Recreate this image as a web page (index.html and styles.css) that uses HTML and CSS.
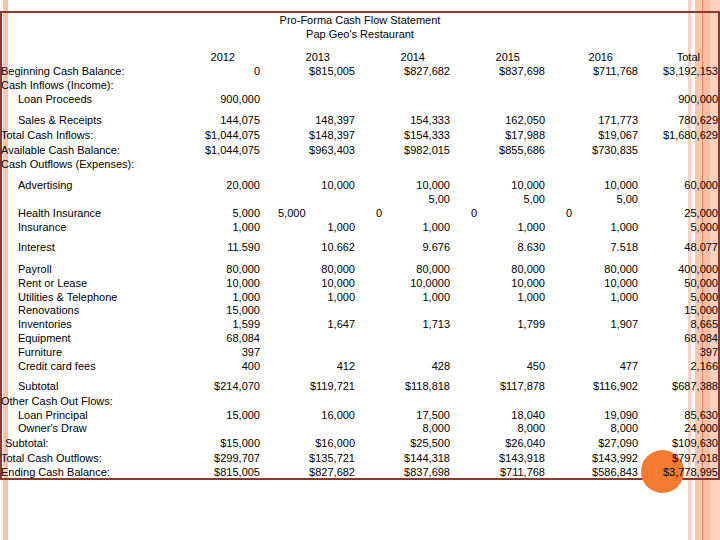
FILE: index.html
```html
<!DOCTYPE html>
<html>
<head>
<meta charset="utf-8">
<link rel="stylesheet" href="styles.css">
</head>
<body>
<div class="sheet">
  <div class="dot"></div>
  <div class="title">Pro-Forma Cash Flow Statement<br>Pap Geo's Restaurant</div>
  <div class="rows">
    <div class="row head"><span></span><span>2012</span><span>2013</span><span>2014</span><span>2015</span><span>2016</span><span class="tot">Total</span></div>
    <div class="row"><span class="lab">Beginning Cash Balance:</span><span>0</span><span>$815,005</span><span>$827,682</span><span>$837,698</span><span>$711,768</span><span>$3,192,153</span></div>
    <div class="row"><span class="lab">Cash Inflows (Income):</span><span></span><span></span><span></span><span></span><span></span><span></span></div>
    <div class="row"><span class="lab in">Loan Proceeds</span><span>900,000</span><span></span><span></span><span></span><span></span><span>900,000</span></div>
    <div class="row sp7"><span class="lab in">Sales &amp; Receipts</span><span>144,075</span><span>148,397</span><span>154,333</span><span>162,050</span><span>171,773</span><span>780,629</span></div>
    <div class="row sp1"><span class="lab">Total Cash Inflows:</span><span>$1,044,075</span><span>$148,397</span><span>$154,333</span><span>$17,988</span><span>$19,067</span><span>$1,680,629</span></div>
    <div class="row sp1"><span class="lab">Available Cash Balance:</span><span>$1,044,075</span><span>$963,403</span><span>$982,015</span><span>$855,686</span><span>$730,835</span><span></span></div>
    <div class="row"><span class="lab">Cash Outflows (Expenses):</span><span></span><span></span><span></span><span></span><span></span><span></span></div>
    <div class="row sp7"><span class="lab in">Advertising</span><span>20,000</span><span>10,000</span><span>10,000</span><span>10,000</span><span>10,000</span><span>60,000</span></div>
    <div class="row"><span class="lab"></span><span></span><span></span><span>5,00</span><span>5,00</span><span>5,00</span><span></span></div>
    <div class="row"><span class="lab in">Health Insurance</span><span>5,000</span><span class="left l18">5,000</span><span class="left">0</span><span class="left">0</span><span class="left">0</span><span>25,000</span></div>
    <div class="row"><span class="lab in">Insurance</span><span>1,000</span><span>1,000</span><span>1,000</span><span>1,000</span><span>1,000</span><span>5,000</span></div>
    <div class="row sp6"><span class="lab in">Interest</span><span>11.590</span><span>10.662</span><span>9.676</span><span>8.630</span><span>7.518</span><span>48.077</span></div>
    <div class="row sp8"><span class="lab in">Payroll</span><span>80,000</span><span>80,000</span><span>80,000</span><span>80,000</span><span>80,000</span><span>400,000</span></div>
    <div class="row"><span class="lab in">Rent or Lease</span><span>10,000</span><span>10,000</span><span>10,0000</span><span>10,000</span><span>10,000</span><span>50,000</span></div>
    <div class="row"><span class="lab in">Utilities &amp; Telephone</span><span>1,000</span><span>1,000</span><span>1,000</span><span>1,000</span><span>1,000</span><span>5,000</span></div>
    <div class="row spm1"><span class="lab in">Renovations</span><span>15,000</span><span></span><span></span><span></span><span></span><span>15,000</span></div>
    <div class="row"><span class="lab in">Inventories</span><span>1,599</span><span>1,647</span><span>1,713</span><span>1,799</span><span>1,907</span><span>8,665</span></div>
    <div class="row"><span class="lab in">Equipment</span><span>68,084</span><span></span><span></span><span></span><span></span><span>68,084</span></div>
    <div class="row"><span class="lab in">Furniture</span><span>397</span><span></span><span></span><span></span><span></span><span>397</span></div>
    <div class="row"><span class="lab in">Credit card fees</span><span>400</span><span>412</span><span>428</span><span>450</span><span>477</span><span>2,166</span></div>
    <div class="row sp6"><span class="lab in">Subtotal</span><span>$214,070</span><span>$119,721</span><span>$118,818</span><span>$117,878</span><span>$116,902</span><span>$687,388</span></div>
    <div class="row sp1"><span class="lab">Other Cash Out Flows:</span><span></span><span></span><span></span><span></span><span></span><span></span></div>
    <div class="row"><span class="lab in">Loan Principal</span><span>15,000</span><span>16,000</span><span>17,500</span><span>18,040</span><span>19,090</span><span>85,630</span></div>
    <div class="row spm1"><span class="lab in">Owner's Draw</span><span></span><span></span><span>8,000</span><span>8,000</span><span>8,000</span><span>24,000</span></div>
    <div class="row sp1"><span class="lab in5">Subtotal:</span><span>$15,000</span><span>$16,000</span><span>$25,500</span><span>$26,040</span><span>$27,090</span><span>$109,630</span></div>
    <div class="row sp1"><span class="lab">Total Cash Outflows:</span><span>$299,707</span><span>$135,721</span><span>$144,318</span><span>$143,918</span><span>$143,992</span><span>$797,018</span></div>
    <div class="row"><span class="lab">Ending Cash Balance:</span><span>$815,005</span><span>$827,682</span><span>$837,698</span><span>$711,768</span><span>$586,843</span><span>$3,778,995</span></div>
  </div>
</div>
</body>
</html>
```
FILE: styles.css
```css
html, body {
  margin: 0;
  padding: 0;
}
body {
  width: 720px;
  height: 540px;
  overflow: hidden;
  font-family: "Liberation Sans", Arial, sans-serif;
  font-size: 11px;
  color: #000;
  background: linear-gradient(to right,
    #ffffff 0px, #ffffff 3px,
    #f8c4ae 3px, #f8c4ae 8px,
    #ffffff 8px, #ffffff 688px,
    #fbd2c2 688px, #fbd2c2 691px,
    #ffffff 691px, #ffffff 695px,
    #fbc6ae 695px, #fbc6ae 702px,
    #e5835b 702px, #e5835b 703px,
    #f9c0a6 703px, #f9c0a6 710px,
    #fcd0bc 710px, #fcd0bc 720px);
}
.sheet {
  position: relative;
  margin-top: 11px;
  width: 716px;
  height: 465px;
  border: 2px solid #8a3a2c;
}
.dot {
  position: absolute;
  left: 639px;
  top: 437px;
  width: 43px;
  height: 43px;
  border-radius: 50%;
  background: #f47b30;
}
.title {
  position: relative;
  text-align: center;
  line-height: 14px;
}
.rows {
  position: relative;
  margin-top: 9px;
}
.row {
  display: grid;
  grid-template-columns: 178px 80px 95px 95px 95px 93px 80px;
  height: 14px;
  line-height: 14px;
  white-space: nowrap;
}
.row span {
  text-align: right;
}
.row span.lab {
  text-align: left;
  margin-left: -1px;
}
.row span.in {
  padding-left: 17px;
}
.row span.in5 {
  padding-left: 4px;
}
.row span.left {
  text-align: left;
  padding-left: 21px;
}
.row span.l18 {
  padding-left: 18px;
}
.head span {
  padding-right: 25px;
}
.head span.tot {
  padding-right: 18px;
}
.sp1 { margin-top: 1px; }
.sp6 { margin-top: 6px; }
.sp7 { margin-top: 7px; }
.sp8 { margin-top: 8px; }
.spm1 { margin-top: -1px; }
```
